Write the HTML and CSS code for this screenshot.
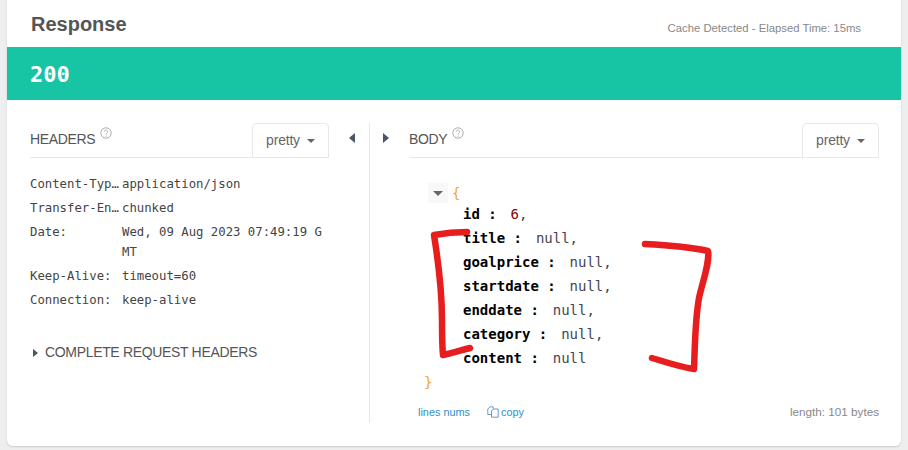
FILE: index.html
```html
<!DOCTYPE html>
<html lang="en">
<head>
<meta charset="utf-8">
<title>Response</title>
<link rel="stylesheet" href="styles.css">
</head>
<body>
<main class="card">
  <header class="head">
    <h2 class="title">Response</h2>
    <span class="elapsed">Cache Detected - Elapsed Time: 15ms</span>
  </header>
  <div class="status">200</div>
  <div class="panes">
    <section class="pane-left">
      <div class="tabbar">
        <span class="tabname">HEADERS<svg class="help" viewBox="0 0 12 12"><circle cx="6" cy="6" r="5.2"/><path d="M4.4 4.7a1.6 1.6 0 1 1 2.5 1.3c-.6.4-.9.7-.9 1.4M6 8.6v1"/></svg></span>
        <span class="pretty">pretty<i class="caret"></i></span>
      </div>
      <dl class="hdrs">
        <div class="hdr"><dt>Content-Type:</dt><dd>application/json</dd></div>
        <div class="hdr"><dt>Transfer-Encoding:</dt><dd>chunked</dd></div>
        <div class="hdr"><dt>Date:</dt><dd>Wed, 09 Aug 2023 07:49:19 GMT</dd></div>
        <div class="hdr"><dt>Keep-Alive:</dt><dd>timeout=60</dd></div>
        <div class="hdr"><dt>Connection:</dt><dd>keep-alive</dd></div>
      </dl>
      <div class="complete"><i class="tri-r small"></i>COMPLETE REQUEST HEADERS</div>
    </section>
    <div class="arrow-l"><i class="tri-l"></i></div>
    <section class="pane-right">
      <div class="arrow-r"><i class="tri-r"></i></div>
      <div class="body-col">
        <div class="tabbar">
          <span class="tabname">BODY<svg class="help" viewBox="0 0 12 12"><circle cx="6" cy="6" r="5.2"/><path d="M4.4 4.7a1.6 1.6 0 1 1 2.5 1.3c-.6.4-.9.7-.9 1.4M6 8.6v1"/></svg></span>
          <span class="pretty">pretty<i class="caret"></i></span>
        </div>
        <div class="tree">
          <div class="open"><span class="toggle"><i class="caret big"></i></span><span class="brace">{</span></div>
          <div class="line"><b>id :</b>  <span class="num">6</span>,</div>
          <div class="line"><b>title :</b>  <span class="nul">null</span>,</div>
          <div class="line"><b>goalprice :</b>  <span class="nul">null</span>,</div>
          <div class="line"><b>startdate :</b>  <span class="nul">null</span>,</div>
          <div class="line"><b>enddate :</b>  <span class="nul">null</span>,</div>
          <div class="line"><b>category :</b>  <span class="nul">null</span>,</div>
          <div class="line"><b>content :</b>  <span class="nul">null</span></div>
          <div class="close"><span class="brace">}</span></div>
        </div>
        <footer class="foot">
          <a class="link">lines nums</a>
          <a class="link copy"><svg class="copyic" viewBox="0 0 12 12"><path d="M4.500 8.500H.8V3L3 .8h3.200v2M4.500 11.200V5l2-2h4.700v8.200z"/></svg>copy</a>
          <span class="len">length: 101 bytes</span>
        </footer>
      </div>
    </section>
  </div>
  <svg class="ink" viewBox="0 0 908 450">
    <path d="M467 232 C455 232 445 233 434 235 C438 260 442 290 442 320 C442 335 442 345 443 355 C452 353 462 350 470 348"/>
    <path d="M645 244 C665 245 690 247 708 251 C710 262 703 280 699 298 C695 320 695 345 694 369 C680 367 665 362 652 358"/>
  </svg>
</main>
</body>
</html>
```

FILE: styles.css
```css
* { box-sizing: border-box; }
html, body { margin: 0; height: 450px; overflow: hidden; background: #eee; }
body { padding: 0 7px; font-family: "Liberation Sans", Arial, sans-serif; color: #555; }
.card { position: relative; height: 446px; background: #fff; border-radius: 0 0 6px 6px; box-shadow: 0 1px 2px rgba(0,0,0,.15); }
.head { height: 47px; display: flex; align-items: center; justify-content: space-between; padding: 2px 40px 0 24px; }
.title { margin: 0; font-size: 20px; font-weight: 700; color: #555; }
.elapsed { font-size: 11.3px; color: #888; position: relative; top: 3px; }
.status { height: 53px; background: #17c4a4; color: #fff; font: 700 22px/55px "DejaVu Sans Mono", monospace; padding-left: 23px; }
.panes { display: flex; padding-top: 23px; height: 346px; }
.pane-left { width: 322px; padding-left: 23px; flex: none; }
.arrow-l { width: 40px; flex: none; padding: 6px 0 0 20px; }
.pane-right { flex: 1; display: flex; border-left: 1px solid #e8e8e8; padding-right: 22px; height: 300px; }
.arrow-r { width: 39px; flex: none; padding: 6px 0 0 13px; }
.body-col { flex: 1; min-width: 0; }
.tabbar { height: 35px; display: flex; justify-content: space-between; align-items: flex-end; border-bottom: 1px solid #e8e8e8; }
.tabname { font-size: 14px; letter-spacing: -.35px; color: #555; align-self: center; display: inline-flex; align-items: flex-start; margin-top: -3px; }
.help { width: 12px; height: 12px; margin: -4px 0 0 5px; fill: none; stroke: #999; stroke-width: .8; }
.pretty { width: 77px; height: 35px; margin-bottom: -1px; padding-bottom: 2px; border: 1px solid #e8e8e8; border-radius: 4px 4px 0 0; font-size: 14px; color: #666; display: flex; align-items: center; justify-content: center; gap: 7px; letter-spacing: -.2px; }
.caret { display: inline-block; width: 0; height: 0; border: 4px solid transparent; border-top-color: #666; border-bottom: 0; margin-top: 2px; }
.caret.big { border-width: 5px 5px 0; border-top-color: #666; border-bottom: 0; margin: 0; }
.tri-l, .tri-r { display: inline-block; width: 0; height: 0; border: 5px solid transparent; }
.tri-l { border-left: 0; border-right: 6px solid #4a5568; }
.tri-r { border-right: 0; border-left: 6px solid #4a5568; }
.tri-r.small { border-width: 4px 0 4px 5px; border-left-color: #555; margin: 2px 7px 0 3px; }
.hdrs { margin: 16px 0 0; font: 12.3px/20px "DejaVu Sans Mono", monospace; color: #444; }
.hdr { display: flex; margin-bottom: 4px; }
.hdr dt { width: 92px; flex: none; white-space: nowrap; overflow: hidden; text-overflow: ellipsis; }
.hdr dd { margin: 0; flex: 1; min-width: 0; word-break: break-all; }
.complete { margin-top: 34px; font-size: 14px; color: #555; letter-spacing: -.33px; display: flex; align-items: center; }
.tree { margin-top: 25px; padding-left: 19px; font: 14px/24px "DejaVu Sans Mono", monospace; color: #444; }
.open { display: flex; align-items: center; height: 20px; margin-bottom: -1px; }
.toggle { width: 20px; height: 20px; background: #f8f8f8; display: flex; align-items: center; justify-content: center; margin-right: 4px; }
.brace { color: #f5a623; font-weight: 400; }
.line { padding-left: 35px; white-space: pre; }
.line b { color: #000; }
.num { color: #800; margin-left: -3px; }
.nul { color: #445; margin-left: -3px; }
.close { margin-left: -4px; }
.foot { display: flex; align-items: center; margin-top: 11px; padding-left: 9px; font-size: 10.9px; }
.link { color: #2f8fce; }
.copy { display: inline-flex; align-items: center; margin-left: 17px; gap: 2px; }
.copyic { width: 12px; height: 12px; fill: none; stroke: #4a7fb5; stroke-width: .8; }
.len { margin-left: auto; color: #888; font-size: 11.7px; }
.ink { position: absolute; left: -7px; top: 0; width: 908px; height: 450px; pointer-events: none; fill: none; stroke: #e81e1e; stroke-width: 6.500; stroke-linecap: round; stroke-linejoin: round; }
```
